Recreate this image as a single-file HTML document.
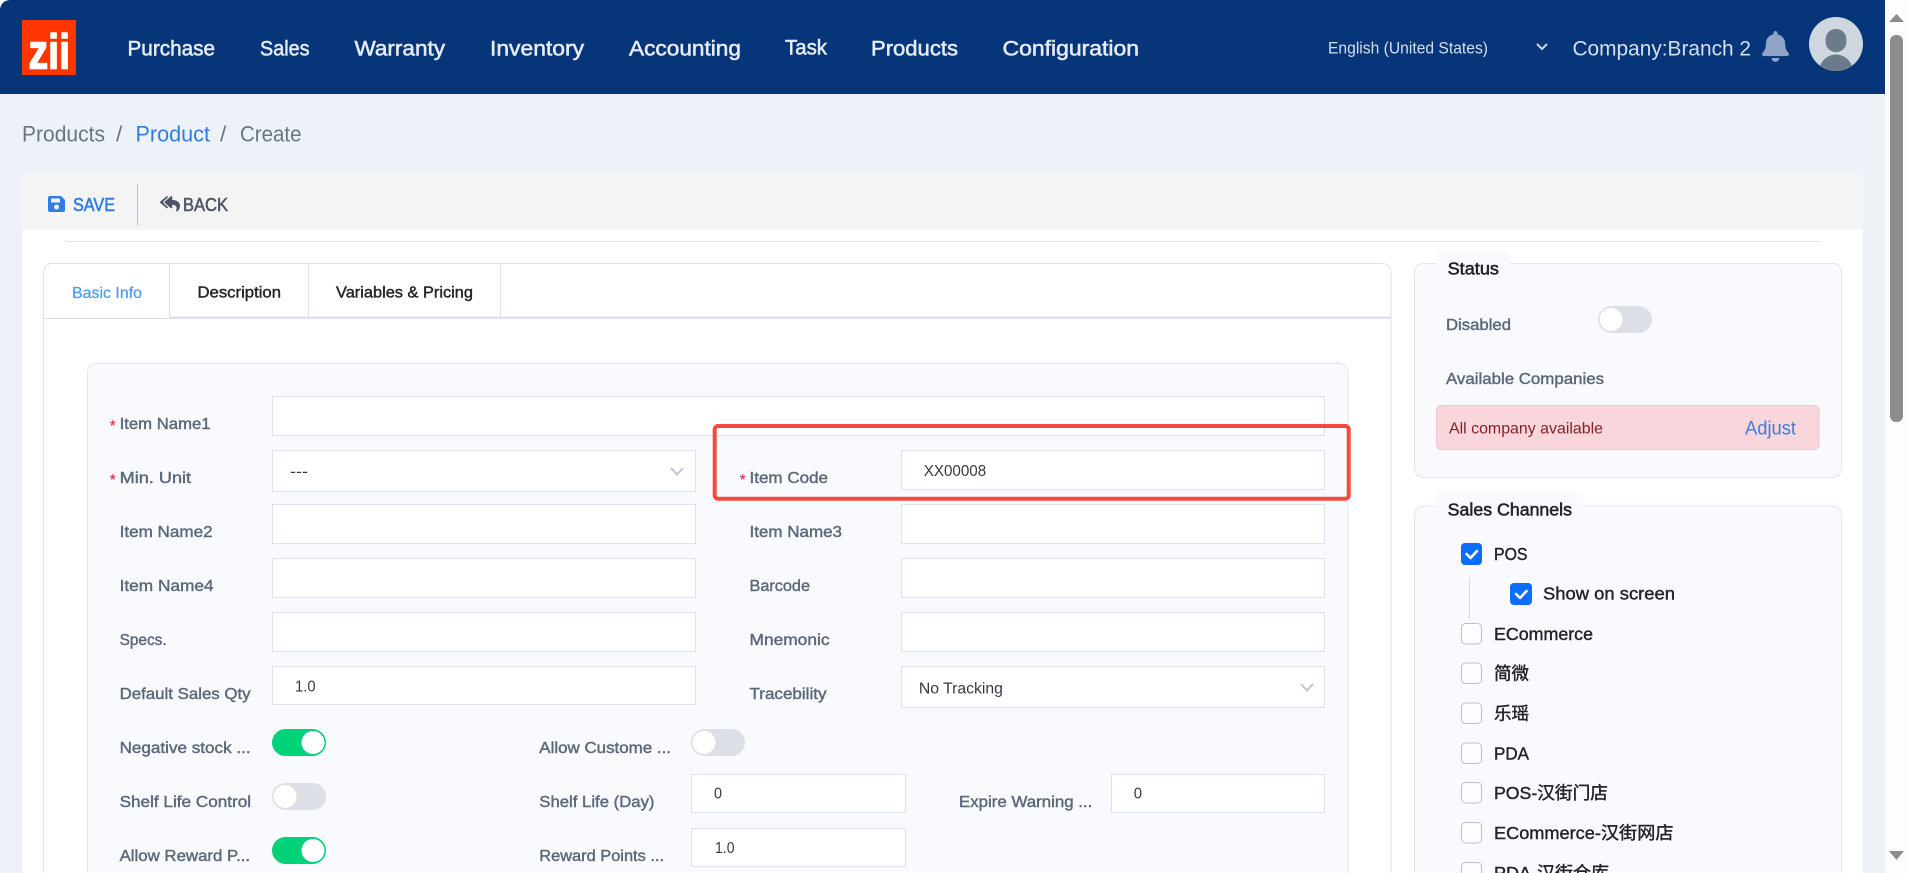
<!DOCTYPE html>
<html lang="en"><head><meta charset="utf-8"><title>Products / Product / Create</title>
<style>
html,body{margin:0;padding:0;width:1908px;height:873px;overflow:hidden;background:#edf1f8}
svg{display:block}
text{font-family:"Liberation Sans","Noto Sans CJK SC",sans-serif;white-space:pre}
.n{font-size:21.5px;fill:#e6ecf5;stroke:#e6ecf5;stroke-width:.55}
.b{font-size:22.5px;fill:#6c757d}
.l{font-size:16px;fill:#5b6879;stroke:#5b6879;stroke-width:.42}
.v{font-size:16px;fill:#343a40}
.c{font-size:17.5px;fill:#212529;stroke:#212529;stroke-width:.42}
.h{font-size:17.5px;fill:#212529;stroke:#212529;stroke-width:.55}
.t{font-size:16px;fill:#212529;stroke:#212529;stroke-width:.42}
.box{fill:#fff;stroke:#dbe3ee;stroke-width:1}
.panel{fill:#f9fafe;stroke:#e2e6ee;stroke-width:1}
.cb{fill:#fdfdff;stroke:#b7c2d2;stroke-width:1}
.cbon{fill:#0d6efd}
.chk{fill:none;stroke:#fff;stroke-width:2.6;stroke-linecap:round;stroke-linejoin:round}
.chev{fill:none;stroke:#c0c4cc;stroke-width:2}
</style></head>
<body>
<svg xmlns="http://www.w3.org/2000/svg" width="1908" height="873" viewBox="0 0 1908 873">
<defs><clipPath id="av"><circle cx="1836" cy="44" r="27"/></clipPath></defs>
<rect width="1908" height="873" fill="#edf1f8"/>

<!-- navbar -->
<rect width="1885" height="94" fill="#06357a"/>
<path d="M0 0H10A10 10 0 0 0 0 10Z" fill="#fff"/>
<rect x="22" y="20" width="54" height="55" fill="#ff3600"/>
<text x="28.500" y="68.500" font-weight="700" fill="#fff" stroke="#fff" stroke-width="1.5" stroke-linejoin="round" textLength="41.500" lengthAdjust="spacingAndGlyphs" style="font-size:49px">zii</text>
<text class="n" x="127.500" y="55.500" textLength="87.500" lengthAdjust="spacingAndGlyphs">Purchase</text>
<text class="n" x="260" y="55.500" textLength="49.500" lengthAdjust="spacingAndGlyphs">Sales</text>
<text class="n" x="354.500" y="55.500" textLength="90.500" lengthAdjust="spacingAndGlyphs">Warranty</text>
<text class="n" x="490" y="55.500" textLength="94" lengthAdjust="spacingAndGlyphs">Inventory</text>
<text class="n" x="629" y="55.500" textLength="112" lengthAdjust="spacingAndGlyphs">Accounting</text>
<text class="n" x="785" y="54.500" textLength="42" lengthAdjust="spacingAndGlyphs">Task</text>
<text class="n" x="871" y="55.500" textLength="87" lengthAdjust="spacingAndGlyphs">Products</text>
<text class="n" x="1002.500" y="55.500" textLength="136.500" lengthAdjust="spacingAndGlyphs">Configuration</text>
<text x="1328" y="53.500" fill="#d6dfec" style="font-size:16.500px" textLength="160" lengthAdjust="spacingAndGlyphs">English (United States)</text>
<polyline points="1537,44 1542,49 1547,44" fill="none" stroke="#cfd9e8" stroke-width="2"/>
<text x="1572.500" y="55.500" fill="#d6dfec" style="font-size:21.500px" textLength="178.500" lengthAdjust="spacingAndGlyphs">Company:Branch 2</text>
<path transform="translate(1762 31) scale(.0603)" fill="#8fa3c5" d="M224 512c35.32 0 63.97-28.65 63.97-64H160.03c0 35.35 28.65 64 63.97 64zm215.39-149.71c-19.32-20.76-55.47-51.99-55.47-154.29 0-77.7-54.48-139.9-127.94-155.16V32c0-17.67-14.32-32-31.98-32s-31.98 14.33-31.98 32v20.84C118.56 68.1 64.08 130.3 64.08 208c0 102.3-36.15 133.53-55.47 154.29-6 6.45-8.66 14.16-8.61 21.71.11 16.4 12.98 32 32.1 32h383.8c19.12 0 32-15.6 32.1-32 .05-7.55-2.61-15.27-8.61-21.71z"/>
<circle cx="1836" cy="44" r="27" fill="#cdd7dd"/>
<g clip-path="url(#av)" fill="#6b7b8a"><rect x="1825.700" y="29" width="20.600" height="23" rx="10"/><ellipse cx="1836" cy="72" rx="17" ry="17.500"/></g>

<!-- scrollbar -->
<rect x="1885" width="23" height="873" fill="#fdfdfd"/>
<polygon points="1889,22 1904,22 1896.500,14" fill="#8c8c8c"/>
<rect x="1890" y="35" width="13" height="387" rx="6" fill="#8c8c8c"/>
<polygon points="1889,851 1904,851 1896.500,860" fill="#8c8c8c"/>

<!-- breadcrumb -->
<text class="b" x="22" y="141.700" textLength="83" lengthAdjust="spacingAndGlyphs">Products</text>
<text class="b" x="116" y="141.700">/</text>
<text class="b" x="135.500" y="141.700" textLength="74.500" lengthAdjust="spacingAndGlyphs" style="fill:#2f7de1">Product</text>
<text class="b" x="220" y="141.700">/</text>
<text class="b" x="240" y="141.700" textLength="61.500" lengthAdjust="spacingAndGlyphs">Create</text>

<!-- card + toolbar -->
<rect x="22" y="173" width="1841" height="700" fill="#fff"/>
<rect x="22" y="173" width="1841" height="57" fill="#f4f4f4"/>
<path d="M48 198a2 2 0 0 1 2-2h11l4 4v10a2 2 0 0 1-2 2H50a2 2 0 0 1-2-2z" fill="#2f7de6"/>
<rect x="51" y="198.500" width="9" height="4" fill="#f4f4f4"/>
<circle cx="56.500" cy="207" r="2.500" fill="#f4f4f4"/>
<text x="73" y="211" fill="#2f7de6" stroke="#2f7de6" stroke-width=".55" style="font-size:18.500px" textLength="42" lengthAdjust="spacingAndGlyphs">SAVE</text>
<rect x="137" y="184" width="1" height="41" fill="#b9c2ce"/>
<path transform="translate(160 195) scale(.0347)" fill="#4b5563" d="M136.309 189.836L312.313 37.851C327.72 24.546 352 35.348 352 56.015v82.763c129.182 10.231 224 52.212 224 183.548 0 61.441-39.582 122.309-83.333 154.132-13.653 9.931-33.111-2.533-28.077-18.631 38.512-123.162-3.922-169.482-112.59-182.015v84.175c0 20.701-24.3 31.453-39.687 18.164L136.309 226.164c-11.071-9.561-11.086-26.753 0-36.328zm-128 36.328L184.313 378.15C199.7 391.439 224 380.687 224 359.986v-15.818l-108.606-93.785A55.96 55.96 0 0 1 96 207.998a55.953 55.953 0 0 1 19.393-42.38L224 71.832V56.015c0-20.667-24.28-31.469-39.687-18.164L8.309 189.836c-11.086 9.575-11.071 26.767 0 36.328z"/>
<text x="183" y="211" fill="#4b5563" stroke="#4b5563" stroke-width=".55" style="font-size:18.500px" textLength="45" lengthAdjust="spacingAndGlyphs">BACK</text>
<rect x="65" y="241" width="1755" height="1" fill="#dde5ee"/>

<!-- tabs panel -->
<path d="M43.500 873V272a8.500 8.500 0 0 1 8.500-8.500H1382.500a8.500 8.500 0 0 1 8.500 8.500V873" fill="#fff" stroke="#dde2ec"/>
<rect x="44" y="318" width="1347" height="1" fill="#dde2ec"/>
<rect x="169" y="316.500" width="1222" height="2" fill="#dde2ec"/>
<rect x="169" y="264" width="1" height="54" fill="#dde2ec"/>
<rect x="308" y="264" width="1" height="54" fill="#dde2ec"/>
<rect x="500" y="264" width="1" height="54" fill="#dde2ec"/>
<text x="72" y="298" fill="#4d9bf5" stroke="#4d9bf5" stroke-width=".25" style="font-size:15.500px" textLength="70" lengthAdjust="spacingAndGlyphs">Basic Info</text>
<text class="t" x="197.500" y="297.300" textLength="83.500" lengthAdjust="spacingAndGlyphs">Description</text>
<text class="t" x="336" y="297.300" textLength="137" lengthAdjust="spacingAndGlyphs">Variables &amp; Pricing</text>

<!-- form panel -->
<path class="panel" d="M87.500 873V372a8.500 8.500 0 0 1 8.500-8.500H1339.500a8.500 8.500 0 0 1 8.500 8.500V873"/>
<rect class="box" x="272.500" y="396.500" width="1052" height="39"/>
<rect class="box" x="272.500" y="450.500" width="423" height="41"/>
<rect class="box" x="901.500" y="450.500" width="423" height="39"/>
<rect class="box" x="272.500" y="504.500" width="423" height="39"/>
<rect class="box" x="901.500" y="504.500" width="423" height="39"/>
<rect class="box" x="272.500" y="558.500" width="423" height="39"/>
<rect class="box" x="901.500" y="558.500" width="423" height="39"/>
<rect class="box" x="272.500" y="612.500" width="423" height="39"/>
<rect class="box" x="901.500" y="612.500" width="423" height="39"/>
<rect class="box" x="272.500" y="666.500" width="423" height="38"/>
<rect class="box" x="901.500" y="666.500" width="423" height="41"/>
<rect class="box" x="691.500" y="774.500" width="214" height="38"/>
<rect class="box" x="1111.500" y="774.500" width="213" height="38"/>
<rect class="box" x="691.500" y="828.500" width="214" height="38"/>
<polyline class="chev" points="671,468 677,474.500 683,468"/>
<polyline class="chev" points="1301,684 1307,690.500 1313,684"/>

<text x="110" y="430" fill="#e8414f" stroke="#e8414f" stroke-width=".4" style="font-size:14px">*</text>
<text x="110" y="484" fill="#e8414f" stroke="#e8414f" stroke-width=".4" style="font-size:14px">*</text>
<text x="740" y="484" fill="#e8414f" stroke="#e8414f" stroke-width=".4" style="font-size:14px">*</text>
<g transform="translate(0 -1)">
<text class="l" x="119.600" y="430" textLength="91" lengthAdjust="spacingAndGlyphs">Item Name1</text>
<text class="l" x="119.600" y="484" textLength="71.500" lengthAdjust="spacingAndGlyphs">Min. Unit</text>
<text class="l" x="119.600" y="538" textLength="93" lengthAdjust="spacingAndGlyphs">Item Name2</text>
<text class="l" x="119.600" y="592" textLength="94" lengthAdjust="spacingAndGlyphs">Item Name4</text>
<text class="l" x="119.600" y="646" textLength="47" lengthAdjust="spacingAndGlyphs">Specs.</text>
<text class="l" x="119.600" y="700" textLength="131" lengthAdjust="spacingAndGlyphs">Default Sales Qty</text>
<text class="l" x="119.600" y="754" textLength="131" lengthAdjust="spacingAndGlyphs">Negative stock ...</text>
<text class="l" x="119.600" y="808" textLength="131.500" lengthAdjust="spacingAndGlyphs">Shelf Life Control</text>
<text class="l" x="119.600" y="862" textLength="130.500" lengthAdjust="spacingAndGlyphs">Allow Reward P...</text>
<text class="l" x="539.300" y="754" textLength="131.700" lengthAdjust="spacingAndGlyphs">Allow Custome ...</text>
<text class="l" x="539.300" y="808" textLength="115.200" lengthAdjust="spacingAndGlyphs">Shelf Life (Day)</text>
<text class="l" x="539.300" y="862" textLength="124.700" lengthAdjust="spacingAndGlyphs">Reward Points ...</text>
<text class="l" x="749.500" y="484" textLength="78.500" lengthAdjust="spacingAndGlyphs">Item Code</text>
<text class="l" x="749.500" y="538" textLength="92.500" lengthAdjust="spacingAndGlyphs">Item Name3</text>
<text class="l" x="749.500" y="592" textLength="60.500" lengthAdjust="spacingAndGlyphs">Barcode</text>
<text class="l" x="749.500" y="646" textLength="80" lengthAdjust="spacingAndGlyphs">Mnemonic</text>
<text class="l" x="749.500" y="700" textLength="77" lengthAdjust="spacingAndGlyphs">Tracebility</text>
<text class="l" x="959" y="808" textLength="133.300" lengthAdjust="spacingAndGlyphs">Expire Warning ...</text>
</g>

<text class="v" x="290" y="476.500" textLength="18" lengthAdjust="spacingAndGlyphs">---</text>
<text class="v" x="923.700" y="476" textLength="62.500" lengthAdjust="spacingAndGlyphs">XX00008</text>
<text class="v" x="295" y="691.500" textLength="20.600" lengthAdjust="spacingAndGlyphs">1.0</text>
<text class="v" x="918.900" y="693.500" textLength="84" lengthAdjust="spacingAndGlyphs">No Tracking</text>
<text class="v" x="714" y="798.500" textLength="8" lengthAdjust="spacingAndGlyphs">0</text>
<text class="v" x="1133.700" y="798.500" textLength="8.300" lengthAdjust="spacingAndGlyphs">0</text>
<text class="v" x="715" y="853" textLength="19.500" lengthAdjust="spacingAndGlyphs">1.0</text>

<!-- toggles -->
<rect x="272" y="729" width="54" height="27" rx="13.500" fill="#00d27a"/><circle cx="313" cy="742.500" r="11.500" fill="#fff"/>
<rect x="272" y="783" width="54" height="27" rx="13.500" fill="#dcdfe6"/><circle cx="285" cy="796.500" r="11.500" fill="#fff"/>
<rect x="272" y="837" width="54" height="27" rx="13.500" fill="#00d27a"/><circle cx="313" cy="850.500" r="11.500" fill="#fff"/>
<rect x="691" y="729" width="54" height="27" rx="13.500" fill="#dcdfe6"/><circle cx="704" cy="742.500" r="11.500" fill="#fff"/>

<!-- highlight -->
<rect x="714.700" y="426" width="634" height="72.700" rx="3.500" fill="none" stroke="#f5493f" stroke-width="4"/>

<!-- status -->
<rect class="panel" x="1414.500" y="263.500" width="427" height="214" rx="9"/>
<path d="M1436 264V255a4 4 0 0 1 4-4h66a4 4 0 0 1 4 4V264Z" fill="#f9fafe"/>
<text class="h" x="1447.600" y="274.500" textLength="51.400" lengthAdjust="spacingAndGlyphs">Status</text>
<text class="l" x="1446" y="330" textLength="65" lengthAdjust="spacingAndGlyphs">Disabled</text>
<rect x="1598" y="306" width="54" height="27" rx="13.500" fill="#dcdfe6"/><circle cx="1611" cy="319.500" r="11.500" fill="#fff"/>
<text class="l" x="1446" y="384" textLength="158" lengthAdjust="spacingAndGlyphs">Available Companies</text>
<rect x="1436.500" y="405.500" width="382.500" height="44" rx="5" fill="#f9d6dc" stroke="#f6c4cc"/>
<text x="1449" y="433.500" fill="#842029" style="font-size:16px" textLength="154" lengthAdjust="spacingAndGlyphs">All company available</text>
<text x="1745" y="434.500" fill="#3b7de0" style="font-size:19px" textLength="51" lengthAdjust="spacingAndGlyphs">Adjust</text>

<!-- sales channels -->
<path class="panel" d="M1414.500 873V515a9 9 0 0 1 9-9H1832.500a9 9 0 0 1 9 9V873"/>
<path d="M1436 507V496a4 4 0 0 1 4-4h139a4 4 0 0 1 4 4V507Z" fill="#f9fafe"/>
<text class="h" x="1447.700" y="515.500" textLength="124.300" lengthAdjust="spacingAndGlyphs">Sales Channels</text>

<rect class="cbon" x="1461" y="543" width="21" height="22" rx="4"/><polyline class="chk" points="1466.500,554 1470.500,558 1477,551"/>
<text class="c" x="1494" y="560" textLength="33.500" lengthAdjust="spacingAndGlyphs">POS</text>
<rect x="1469" y="578" width="1" height="40" fill="#d5dae2"/>
<rect class="cbon" x="1510" y="583" width="22" height="22" rx="4"/><polyline class="chk" points="1516,594 1520,598 1526.500,591"/>
<text class="c" x="1543" y="599.700" textLength="132" lengthAdjust="spacingAndGlyphs">Show on screen</text>

<rect class="cb" x="1461.500" y="623.500" width="20" height="20.500" rx="4"/>
<text class="c" x="1494" y="639.800" textLength="99" lengthAdjust="spacingAndGlyphs">ECommerce</text>
<rect class="cb" x="1461.500" y="663" width="20" height="20.500" rx="4"/>
<text class="c" x="1494" y="679.500" textLength="35" lengthAdjust="spacingAndGlyphs">简微</text>
<rect class="cb" x="1461.500" y="703" width="20" height="20.500" rx="4"/>
<text class="c" x="1494" y="719.500" textLength="35" lengthAdjust="spacingAndGlyphs">乐瑶</text>
<rect class="cb" x="1461.500" y="743" width="20" height="20.500" rx="4"/>
<text class="c" x="1494" y="759.400" textLength="35" lengthAdjust="spacingAndGlyphs">PDA</text>
<rect class="cb" x="1461.500" y="782.500" width="20" height="20.500" rx="4"/>
<text class="c" x="1494" y="799" textLength="114" lengthAdjust="spacingAndGlyphs">POS-汉街门店</text>
<rect class="cb" x="1461.500" y="822.500" width="20" height="20.500" rx="4"/>
<text class="c" x="1494" y="839" textLength="179.500" lengthAdjust="spacingAndGlyphs">ECommerce-汉街网店</text>
<rect class="cb" x="1461.500" y="862.500" width="20" height="20.500" rx="4"/>
<text class="c" x="1494" y="879" textLength="115" lengthAdjust="spacingAndGlyphs">PDA-汉街仓库</text>
</svg>
</body></html>
